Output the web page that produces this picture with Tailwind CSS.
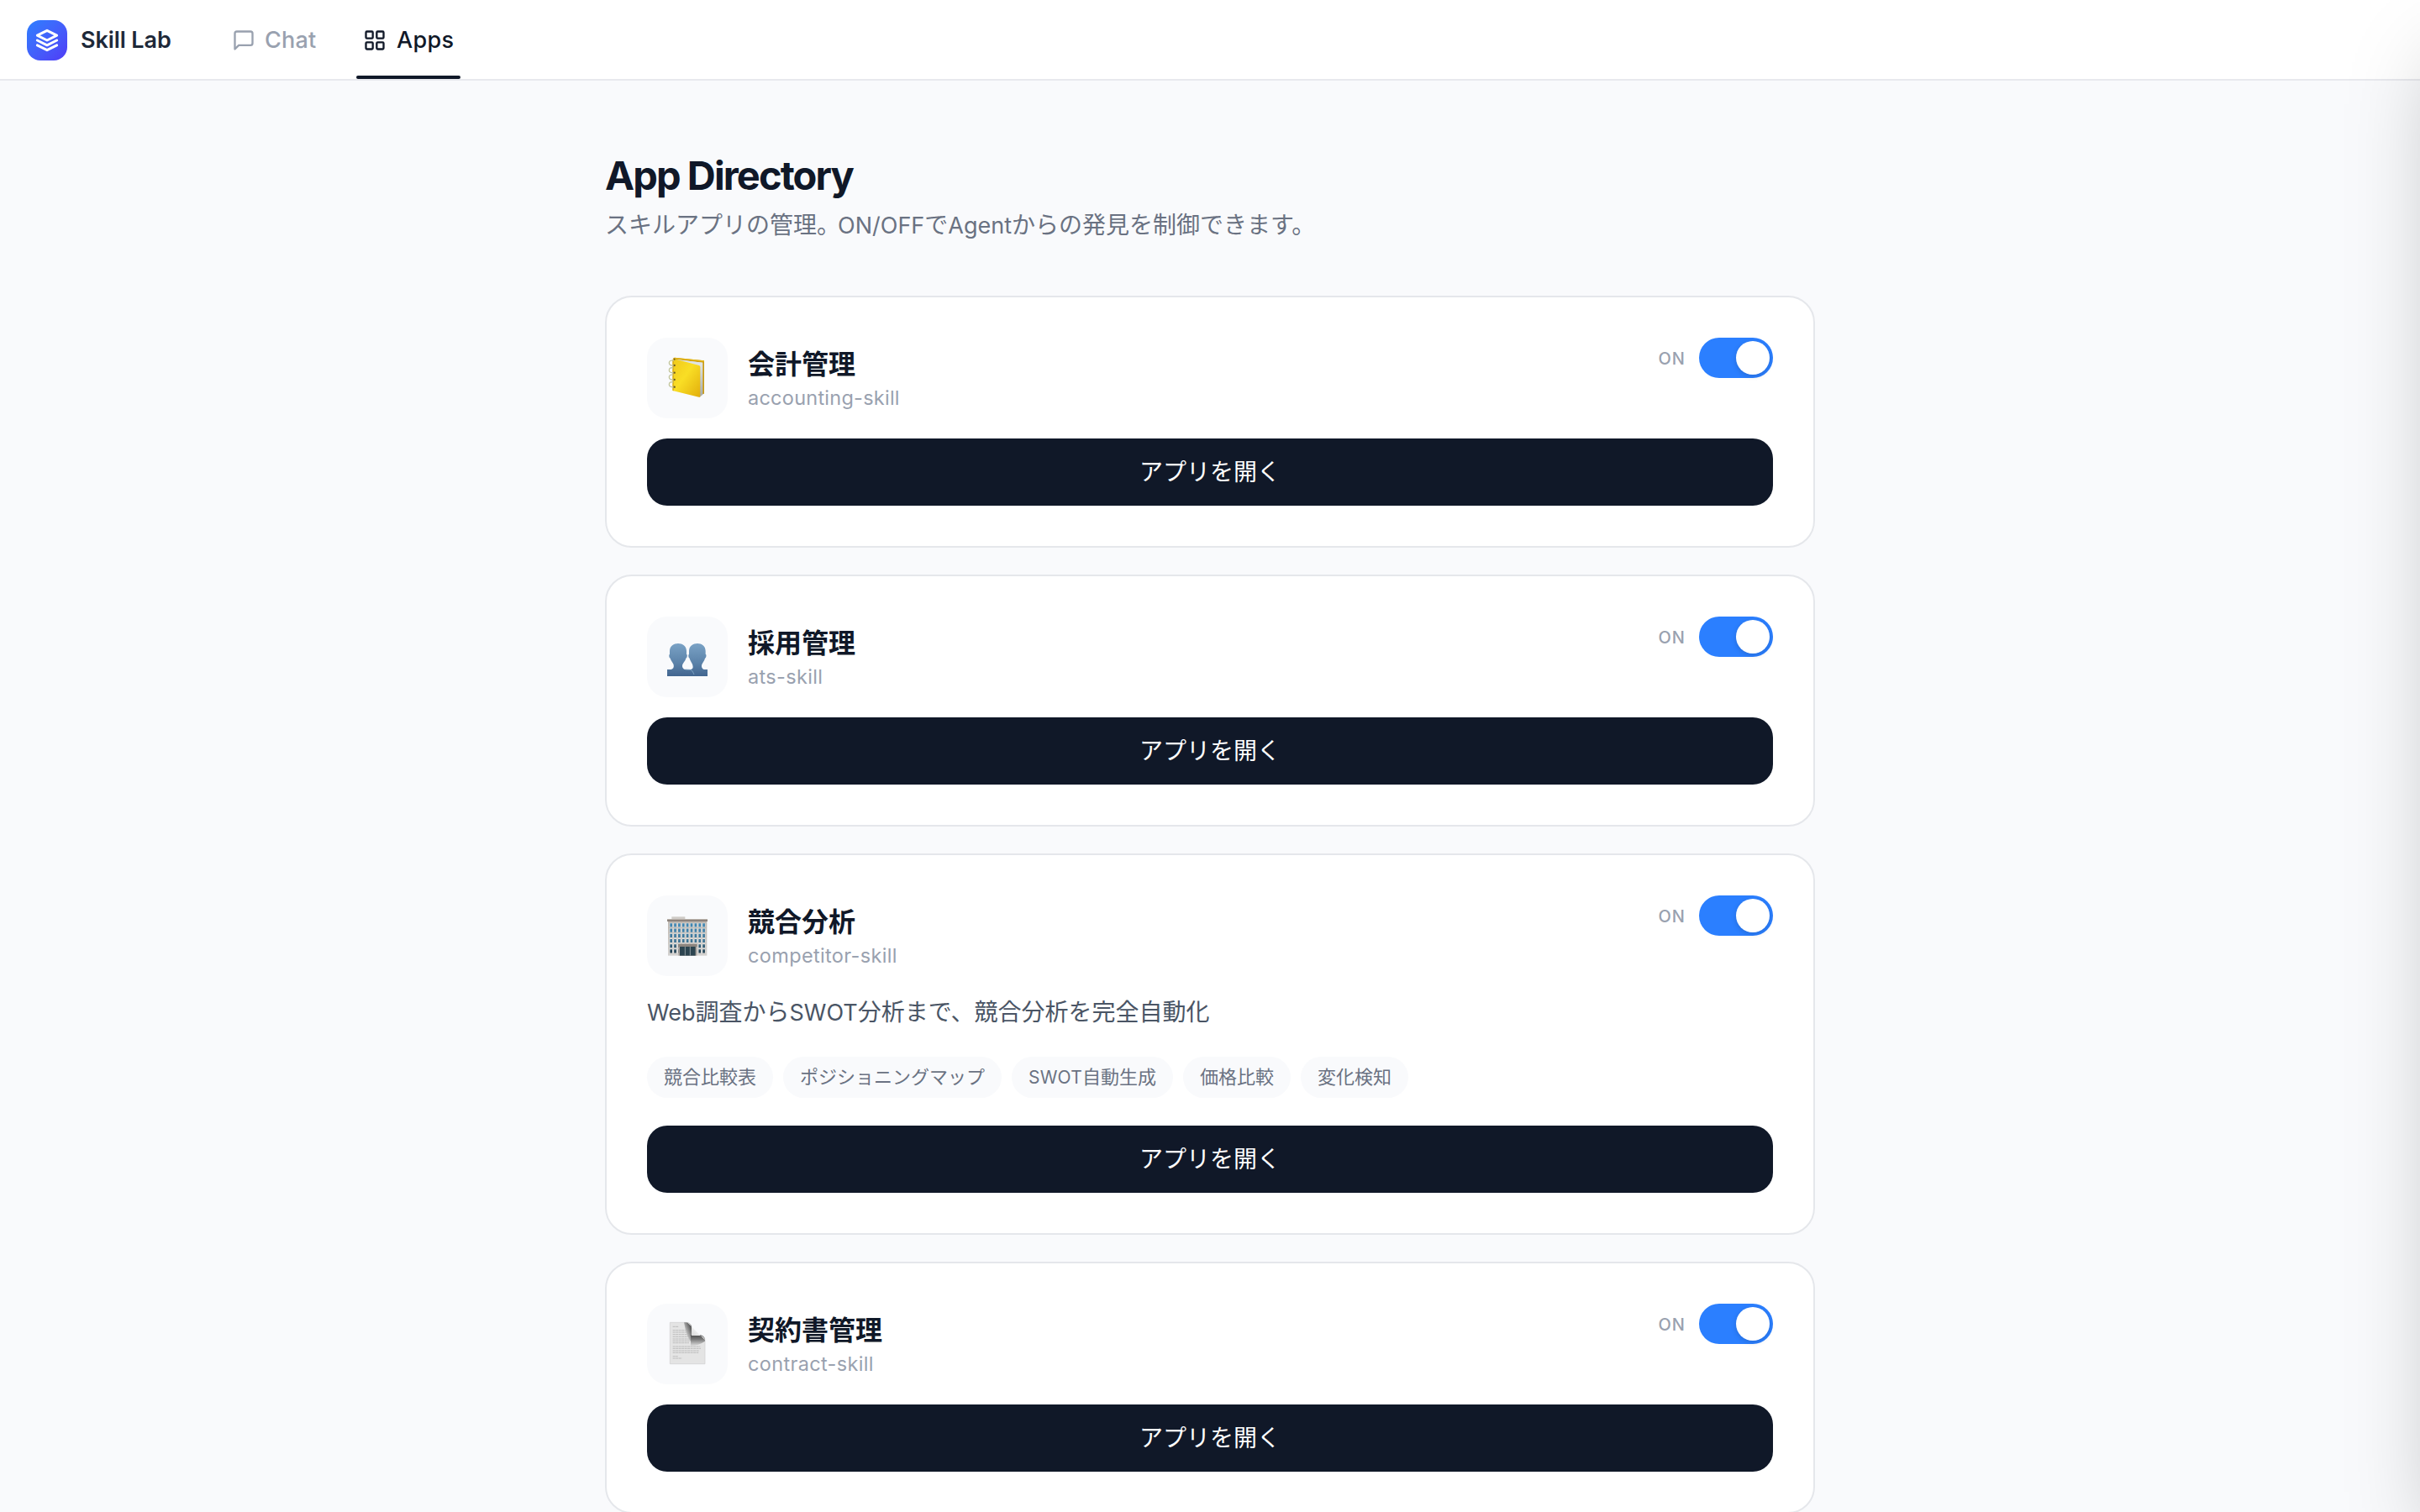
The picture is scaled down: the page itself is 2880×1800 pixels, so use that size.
<!DOCTYPE html>
<html lang="ja">
<head>
<meta charset="utf-8">
<title>Skill Lab</title>
<script src="https://cdn.jsdelivr.net/npm/@tailwindcss/browser@4"></script>
</head>
<body class="relative h-[1800px] w-full overflow-hidden bg-[#f9fafc] font-['Inter','Noto_Sans_CJK_JP',sans-serif] antialiased">

<header class="flex h-24 items-stretch border-b-2 border-[#e8e9ee] bg-white pl-8">
  <div class="flex w-[236px] items-center gap-4 pt-0.5">
    <div class="flex size-12 items-center justify-center rounded-2xl bg-linear-to-br from-[#2b7fff] to-[#4f39f6]">
      <svg class="size-7" viewBox="0 0 24 24" fill="none" stroke="#fff" stroke-width="2.5" stroke-linecap="round" stroke-linejoin="round"><path d="M12 2 2 7l10 5 10-5z"/><path d="m2 17 10 5 10-5"/><path d="m2 12 10 5 10-5"/></svg>
    </div>
    <span class="pt-px text-[27px] font-semibold tracking-[-0.1px] text-[#1e2939]">Skill Lab</span>
  </div>
  <nav class="flex gap-10">
    <div class="flex w-[116px] items-center gap-[11px] pt-0.5 pl-2 text-[#99a1af]">
      <svg class="size-7 shrink-0" viewBox="0 0 24 24" fill="none" stroke="currentColor" stroke-width="2" stroke-linecap="round" stroke-linejoin="round"><path d="M21 15a2 2 0 0 1-2 2H7l-4 4V5a2 2 0 0 1 2-2h14a2 2 0 0 1 2 2z"/></svg>
      <span class="pt-px text-[27px] font-medium tracking-[0.2px]">Chat</span>
    </div>
    <div class="relative flex w-[124px] items-center gap-3 pt-0.5 pl-2 text-[#101828]">
      <svg class="size-7 shrink-0" viewBox="0 0 24 24" fill="none" stroke="currentColor" stroke-width="2" stroke-linecap="round" stroke-linejoin="round"><rect x="3" y="3" width="7" height="7" rx="1"/><rect x="14" y="3" width="7" height="7" rx="1"/><rect x="14" y="14" width="7" height="7" rx="1"/><rect x="3" y="14" width="7" height="7" rx="1"/></svg>
      <span class="pt-px text-[27px] font-medium tracking-[0.3px]">Apps</span>
      <span class="absolute inset-x-0 bottom-0 h-1 rounded-full bg-[#101828]"></span>
    </div>
  </nav>
</header>

<main class="mx-auto w-[1440px] pt-20">
  <h1 class="text-[47px] leading-[66px] font-bold tracking-[-1.9px] text-[#101828]">App Directory</h1>
  <p class="mt-[5px] mb-[63px] h-[42px] text-[28px] leading-[42px] text-[#6a7282]">スキルアプリの管理。<span class="-ml-[3px] text-[27px]">ON/OFF</span>で<span class="text-[27px]">Agent</span>からの発見を制御できます。</p>

  <div class="flex flex-col gap-8">

    <section class="h-[300px] rounded-[32px] border-2 border-[#e5e7eb] bg-white p-12">
      <div class="flex h-24 items-start">
        <div class="size-24 rounded-3xl bg-[#f9fafc]">
          <svg class="size-24" viewBox="0 0 288 288">
            <defs>
              <linearGradient id="cover" x1="0" y1="0" x2="1" y2="1"><stop offset="0" stop-color="#f0c81c"/><stop offset=".45" stop-color="#f9de25"/><stop offset="1" stop-color="#e2ae0c"/></linearGradient>
              <linearGradient id="pages" x1="0" y1="0" x2="0" y2="1"><stop offset="0" stop-color="#e9edee"/><stop offset="1" stop-color="#a4a9aa"/></linearGradient>
            </defs>
            <path d="M92 74 98 71 204 82V200L192 204Z" fill="#c99a12"/>
            <path d="M98 71 204 82V86L98 75Z" fill="#e6b91a"/>
            <path d="M97 77 199 89V203L188 212Z" fill="url(#pages)"/>
            <path d="M97 77 199 89 189 101Z" fill="#dfe4e6"/>
            <path d="M91 79Q93 75 98 76L186 99Q190 100 190 105V209Q190 214 185 212L91 189Z" fill="url(#cover)"/>
            <path d="M91 79V189L96 190V79Z" fill="#cf9f12" opacity=".6"/>
            <g fill="none" stroke="#c3c69c" stroke-width="4"><path d="M98 99Q79 101 79 90T96 82"/><path d="M98 125Q79 127 79 116T94 108"/><path d="M98 150Q79 152 79 141T94 133"/><path d="M98 176Q79 178 79 167T94 159"/></g>
            <g fill="#6b5a1c"><circle cx="98" cy="99" r="3.5"/><circle cx="98" cy="125" r="3.5"/><circle cx="98" cy="150" r="3.5"/><circle cx="98" cy="176" r="3.5"/><circle cx="98" cy="77" r="3"/></g>
          </svg>
        </div>
        <div class="ml-6 flex-1 pt-[11px]">
          <h2 class="h-[41px] text-[32px] leading-[41px] font-bold text-[#101828]">会計管理</h2>
          <p class="mt-1 text-[23.5px] leading-8 tracking-[0.25px] text-[#99a1af]">accounting-skill</p>
        </div>
        <div class="flex h-12 items-center gap-4">
          <span class="pt-0.5 text-[20px] font-medium tracking-[1px] text-[#99a1af]">ON</span>
          <span class="flex h-12 w-[88px] items-center justify-end rounded-full bg-[#2b7fff] p-1"><span class="size-10 rounded-full bg-white shadow-[0_2px_6px_rgba(0,0,0,0.15)]"></span></span>
        </div>
      </div>
      <button class="mt-6 block h-20 w-full rounded-3xl bg-[#101828] text-[28px] text-white">アプリを開く</button>
    </section>

    <section class="h-[300px] rounded-[32px] border-2 border-[#e5e7eb] bg-white p-12">
      <div class="flex h-24 items-start">
        <div class="size-24 rounded-3xl bg-[#f9fafc]">
          <svg class="size-24" viewBox="0 0 288 288">
            <defs><linearGradient id="bust" gradientUnits="userSpaceOnUse" x1="0" y1="95" x2="0" y2="213"><stop offset="0" stop-color="#7ba3c6"/><stop offset=".6" stop-color="#5b82a9"/><stop offset="1" stop-color="#42658f"/></linearGradient></defs>
            <g fill="url(#bust)">
              <path d="M180 96C195 96 209 105 209 123L209 134Q213 136 211 143Q210 148 207 149C205 159 198 164 196 171C193 180 197 187 204 189H216V213H140V193C150 189 164 191 164 180C164 168 155 161 152 149Q148 148 148 142Q147 136 150 134V123C150 105 165 96 180 96Z"/>
              <path d="M111 96C126 96 141 105 141 123V134Q145 136 143 143Q142 148 139 149C137 159 129 164 127 171C124 180 128 187 136 189L154 190Q164 192 168 213H72V189H86C93 188 97 182 95 172C92 163 86 159 83 149Q79 148 79 142Q78 136 81 134V123C81 105 96 96 111 96Z"/>
            </g>
            <path d="M136 189 154 190Q164 192 168 207" fill="none" stroke="#84a8c8" stroke-width="2.5"/>
          </svg>
        </div>
        <div class="ml-6 flex-1 pt-[11px]">
          <h2 class="h-[41px] text-[32px] leading-[41px] font-bold text-[#101828]">採用管理</h2>
          <p class="mt-1 text-[23.5px] leading-8 tracking-[0.35px] text-[#99a1af]">ats-skill</p>
        </div>
        <div class="flex h-12 items-center gap-4">
          <span class="pt-0.5 text-[20px] font-medium tracking-[1px] text-[#99a1af]">ON</span>
          <span class="flex h-12 w-[88px] items-center justify-end rounded-full bg-[#2b7fff] p-1"><span class="size-10 rounded-full bg-white shadow-[0_2px_6px_rgba(0,0,0,0.15)]"></span></span>
        </div>
      </div>
      <button class="mt-6 block h-20 w-full rounded-3xl bg-[#101828] text-[28px] text-white">アプリを開く</button>
    </section>

    <section class="h-[454px] rounded-[32px] border-2 border-[#e5e7eb] bg-white p-12">
      <div class="flex h-24 items-start">
        <div class="size-24 rounded-3xl bg-[#f9fafc]">
          <svg class="size-24" viewBox="0 0 288 288">
            <defs>
              <linearGradient id="wall" x1="0" y1="0" x2="0" y2="1"><stop offset="0" stop-color="#bcb5ae"/><stop offset="1" stop-color="#d3d1cf"/></linearGradient>
              <linearGradient id="glass" gradientUnits="userSpaceOnUse" x1="0" y1="98" x2="0" y2="206"><stop offset="0" stop-color="#4188b5"/><stop offset=".6" stop-color="#3f7494"/><stop offset="1" stop-color="#1f3b4b"/></linearGradient>
              <pattern id="windows" patternUnits="userSpaceOnUse" x="79" y="98" width="14.6" height="18.6"><rect x="1" y="0" width="11.6" height="15.5" fill="#e6e6e4"/></pattern>
            </defs>
            <rect x="88" y="76" width="48" height="10" fill="#cfcbc7"/>
            <rect x="75" y="88" width="139" height="127" fill="url(#wall)"/>
            <rect x="72" y="84" width="144" height="9" fill="#8b817b"/>
            <rect x="72" y="84" width="144" height="3" fill="#b9b1aa"/>
            <rect x="79" y="98" width="131" height="110" fill="url(#windows)"/>
            <path d="M86 100V208M100.600 100V208M115.200 100V208M129.800 100V208M144.400 100V208M159 100V208M173.600 100V208M188.200 100V208M202.800 100V208" stroke="url(#glass)" stroke-width="8" stroke-dasharray="12.500 6.100"/>
            <rect x="112" y="180" width="66" height="35" fill="#aaa39d"/>
            <rect x="117" y="183" width="56" height="32" fill="#2c4450"/>
            <path d="M136 183V215M154 183V215" stroke="#8e9a9f" stroke-width="3"/>
            <rect x="111" y="173" width="68" height="10" fill="#8d857f"/>
          </svg>
        </div>
        <div class="ml-6 flex-1 pt-[11px]">
          <h2 class="h-[41px] text-[32px] leading-[41px] font-bold text-[#101828]">競合分析</h2>
          <p class="mt-1 text-[23.5px] leading-8 tracking-[0.35px] text-[#99a1af]">competitor-skill</p>
        </div>
        <div class="flex h-12 items-center gap-4">
          <span class="pt-0.5 text-[20px] font-medium tracking-[1px] text-[#99a1af]">ON</span>
          <span class="flex h-12 w-[88px] items-center justify-end rounded-full bg-[#2b7fff] p-1"><span class="size-10 rounded-full bg-white shadow-[0_2px_6px_rgba(0,0,0,0.15)]"></span></span>
        </div>
      </div>
      <p class="mt-5 h-[46px] text-[28px] leading-[46px] text-[#4a5565]"><span class="text-[27px]">Web</span>調査から<span class="text-[27px]">SWOT</span>分析まで、競合分析を完全自動化</p>
      <div class="mt-[30px] flex h-[49px] gap-3 text-[22px] leading-[48px] text-[#6a7282]">
        <span class="rounded-full bg-[#f9fafc] px-5">競合比較表</span>
        <span class="rounded-full bg-[#f9fafc] px-5">ポジショニングマップ</span>
        <span class="rounded-full bg-[#f9fafc] px-5"><span class="text-[21px] tracking-[0.2px]">SWOT</span>自動生成</span>
        <span class="rounded-full bg-[#f9fafc] px-5">価格比較</span>
        <span class="rounded-full bg-[#f9fafc] px-5">変化検知</span>
      </div>
      <button class="mt-[33px] block h-20 w-full rounded-3xl bg-[#101828] text-[28px] text-white">アプリを開く</button>
    </section>

    <section class="h-[300px] rounded-[32px] border-2 border-[#e5e7eb] bg-white p-12">
      <div class="flex h-24 items-start">
        <div class="size-24 rounded-3xl bg-[#f9fafc]">
          <svg class="size-24" viewBox="0 0 288 288">
            <defs>
              <linearGradient id="curl" gradientUnits="userSpaceOnUse" x1="0" y1="112" x2="0" y2="152"><stop offset="0" stop-color="#4d4d4d"/><stop offset=".4" stop-color="#7d7d7d"/><stop offset="1" stop-color="#e2e2e2"/></linearGradient>
              <linearGradient id="curlside" gradientUnits="userSpaceOnUse" x1="162" y1="90" x2="132" y2="102"><stop offset="0" stop-color="#4a4a4a"/><stop offset="1" stop-color="#e0e0e0"/></linearGradient>
              <linearGradient id="flap" x1="0" y1="1" x2="1" y2="0"><stop offset="0" stop-color="#c4c4c4"/><stop offset=".6" stop-color="#f6f6f6"/></linearGradient>
            </defs>
            <path d="M82 67H138C152 67 160 76 160 90V112H188C200 113 207 120 207 132V215H82Z" fill="#e4e4e4" stroke="#cfcfcf" stroke-width="2"/>
            <path d="M132 67H138C152 67 160 76 160 90V140Q140 120 132 67Z" fill="url(#curlside)"/>
            <path d="M156 112H188C200 113 207 120 207 134Q180 152 156 150Z" fill="url(#curl)"/>
            <path d="M144 67 207 130Q202 114 186 114H159V88Q159 72 144 67Z" fill="url(#flap)"/>
            <g stroke="#b4b4b4" stroke-width="2.500" stroke-dasharray="9 1.500"><path d="M92 82H112M92 95H142M92 102H146M92 110H148M92 118H150M92 126H150M92 133H152M92 140H150M92 153H190M92 160H192M92 168H186M92 175H184M92 188H110M92 195H124"/></g>
          </svg>
        </div>
        <div class="ml-6 flex-1 pt-[11px]">
          <h2 class="h-[41px] text-[32px] leading-[41px] font-bold text-[#101828]">契約書管理</h2>
          <p class="mt-1 text-[23.5px] leading-8 tracking-[0.35px] text-[#99a1af]">contract-skill</p>
        </div>
        <div class="flex h-12 items-center gap-4">
          <span class="pt-0.5 text-[20px] font-medium tracking-[1px] text-[#99a1af]">ON</span>
          <span class="flex h-12 w-[88px] items-center justify-end rounded-full bg-[#2b7fff] p-1"><span class="size-10 rounded-full bg-white shadow-[0_2px_6px_rgba(0,0,0,0.15)]"></span></span>
        </div>
      </div>
      <button class="mt-6 block h-20 w-full rounded-3xl bg-[#101828] text-[28px] text-white">アプリを開く</button>
    </section>

  </div>
</main>

<!-- Closed side drawer: only its shadow reaches into the window -->
<div class="pointer-events-none absolute inset-0 overflow-hidden">
  <aside class="absolute top-0 left-full h-[1800px] w-[800px] bg-white shadow-[0_50px_100px_-24px_rgba(0,0,0,0.25)]"></aside>
</div>

</body>
</html>
